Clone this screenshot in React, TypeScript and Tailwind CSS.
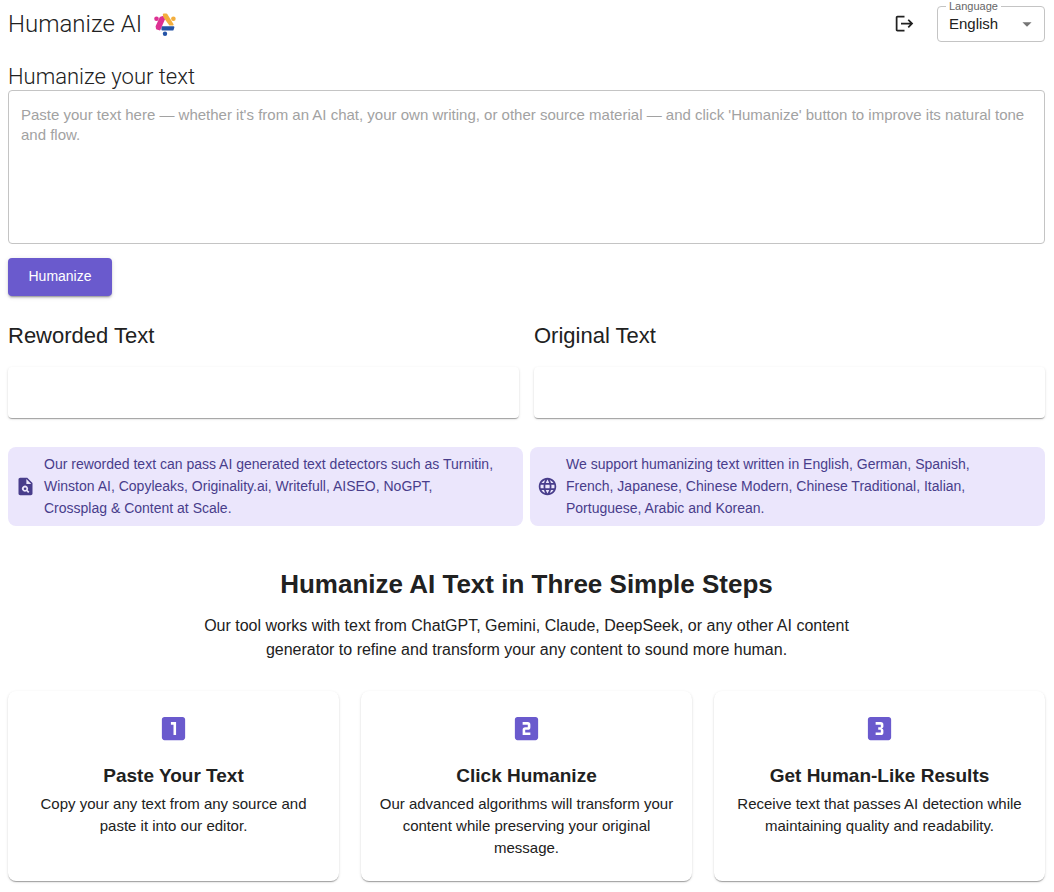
import { MdArrowDropDown, MdLanguage, MdLogout, MdLooks3, MdLooksOne, MdLooksTwo, MdPlagiarism } from "react-icons/md";

const steps = [
    {
        icon: MdLooksOne,
        title: "Paste Your Text",
        text: "Copy your any text from any source and paste it into our editor.",
    },
    {
        icon: MdLooksTwo,
        title: "Click Humanize",
        text: "Our advanced algorithms will transform your content while preserving your original message.",
    },
    {
        icon: MdLooks3,
        title: "Get Human-Like Results",
        text: "Receive text that passes AI detection while maintaining quality and readability.",
    },
];

const notices = [
    {
        icon: MdPlagiarism,
        text: "Our reworded text can pass AI generated text detectors such as Turnitin, Winston AI, Copyleaks, Originality.ai, Writefull, AISEO, NoGPT, Crossplag & Content at Scale.",
    },
    {
        icon: MdLanguage,
        text: "We support humanizing text written in English, German, Spanish, French, Japanese, Chinese Modern, Chinese Traditional, Italian, Portuguese, Arabic and Korean.",
    },
];

function Logo() {
    return (
        <svg viewBox="0 0 22 24" className="h-6 w-[22px]" strokeWidth="2" strokeLinejoin="round" aria-hidden="true">
            <circle cx="2.5" cy="6.8" r="2.3" fill="#dd3293" />
            <circle cx="19.4" cy="6.8" r="2.3" fill="#f3ae3d" />
            <circle cx="11" cy="21.8" r="2.2" fill="#2453a6" />
            <path d="M8.4 15.2H19.4L18.6 17.6H8.4z" fill="#2453a6" stroke="#2453a6" />
            <path d="M6.6 5.6 9 5 10 7.2 6.4 15.4 5.6 17.4 3 16.6 2.6 14.4z" fill="#dd3293" stroke="#dd3293" />
            <path d="M9.8 2.4H12.4L18.6 12.6H16L10.2 4.6z" fill="#f3ae3d" stroke="#f3ae3d" />
        </svg>
    );
}

function Header() {
    return (
        <header className="flex items-start justify-between">
            <div className="flex items-center gap-3 pt-2">
                <h1 className="text-2xl font-light font-[Roboto,sans-serif]">Humanize AI</h1>
                <Logo />
            </div>
            <div className="flex items-center gap-[22px]">
                <button type="button" aria-label="Log out" className="pt-1">
                    <MdLogout size={21} />
                </button>
                <fieldset className="w-[108px] rounded border border-[#c4c4c4]">
                    <legend className="ml-2 px-[3px] text-[11px] leading-3 text-[#666]">
                        <label htmlFor="language">Language</label>
                    </legend>
                    <div className="relative h-[29px]">
                        <select id="language" className="h-6 w-full appearance-none bg-transparent pl-[11px] text-[15px] outline-none">
                            <option>English</option>
                        </select>
                        <MdArrowDropDown size={22} className="pointer-events-none absolute right-[6px] top-px text-[#757575]" />
                    </div>
                </fieldset>
            </div>
        </header>
    );
}

function ResultPanel({ title }: { title: string }) {
    return (
        <section>
            <h2 className="text-[22px] leading-7">{title}</h2>
            <div className="mt-[17px] h-[51px] rounded bg-white shadow-[0_2px_1px_-1px_rgba(0,0,0,0.2),0_1px_1px_0_rgba(0,0,0,0.14),0_1px_3px_0_rgba(0,0,0,0.12)]" />
        </section>
    );
}

export default function App() {
    return (
        <div className="bg-white pb-[11px] pl-2 pr-[9px] font-['Liberation_Sans',Arial,sans-serif] text-[#212121]">
            <Header />

            <main>
                <form className="mt-[22px]" onSubmit={(e) => e.preventDefault()}>
                    <label htmlFor="source" className="block text-[22px] leading-[26px] font-light font-[Roboto,sans-serif]">
                        Humanize your text
                    </label>
                    <textarea
                        id="source"
                        className="block h-[154px] w-full resize-none rounded border border-[#c4c4c4] px-3 py-[14px] text-[15px] leading-5 outline-none placeholder:text-[#a2a2a2]"
                        placeholder="Paste your text here — whether it's from an AI chat, your own writing, or other source material — and click 'Humanize' button to improve its natural tone and flow."
                    />
                    <button
                        type="submit"
                        className="mt-[14px] h-[38px] w-[104px] rounded bg-[#6a5acd] pb-[2px] text-sm text-white shadow-[0_3px_1px_-2px_rgba(0,0,0,0.2),0_2px_2px_0_rgba(0,0,0,0.14),0_1px_5px_0_rgba(0,0,0,0.12)]"
                    >
                        Humanize
                    </button>
                </form>

                <div className="mt-[26px] grid grid-cols-2 gap-[15px]">
                    <ResultPanel title="Reworded Text" />
                    <ResultPanel title="Original Text" />
                </div>

                <div className="mt-[29px] grid grid-cols-2 gap-[7px]">
                    {notices.map(({ icon: Icon, text }) => (
                        <div key={text} className="flex items-center gap-2 rounded-lg bg-[#ebe6fc] pt-[6px] pr-[27px] pb-[7px] pl-[7px] text-[#483d8b]">
                            <Icon size={21} className="shrink-0" />
                            <p className="text-sm leading-[22px]">{text}</p>
                        </div>
                    ))}
                </div>

                <section className="mt-[42px] text-center">
                    <h2 className="text-[26px] leading-8 font-bold">Humanize AI Text in Three Simple Steps</h2>
                    <p className="mx-auto mt-[14px] max-w-[680px] text-base">
                        Our tool works with text from ChatGPT, Gemini, Claude, DeepSeek, or any other AI content generator to refine and
                        transform your any content to sound more human.
                    </p>
                    <div className="mt-[29px] grid grid-cols-3 gap-[22px]">
                        {steps.map(({ icon: Icon, title, text }) => (
                            <article
                                key={title}
                                className="rounded-lg bg-white px-4 py-[22px] shadow-[0_2px_1px_-1px_rgba(0,0,0,0.2),0_1px_1px_0_rgba(0,0,0,0.14),0_1px_3px_0_rgba(0,0,0,0.12)]"
                            >
                                <Icon size={31} className="mx-auto text-[#6a5acd]" />
                                <h3 className="mt-5 text-[19px] leading-6 font-bold">{title}</h3>
                                <p className="mt-[5px] text-[15px] leading-[22px]">{text}</p>
                            </article>
                        ))}
                    </div>
                </section>
            </main>
        </div>
    );
}
